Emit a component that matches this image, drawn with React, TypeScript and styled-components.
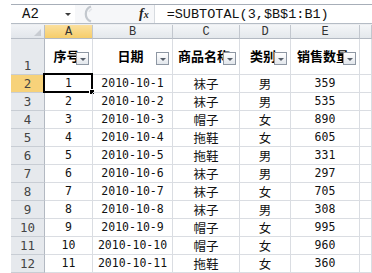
import styled, { createGlobalStyle } from "styled-components";

const GlobalStyle = createGlobalStyle`
  html, body {
    margin: 0;
    padding: 0;
    background: #ffffff;
  }
`;

const mono = `"Liberation Mono", "DejaVu Sans Mono", monospace`;
const digits = `"DejaVu Sans Mono", "Noto Sans CJK SC", monospace`;

const rows = [
  ["1", "2010-10-1", "袜子", "男", "359"],
  ["2", "2010-10-2", "袜子", "男", "535"],
  ["3", "2010-10-3", "帽子", "女", "890"],
  ["4", "2010-10-4", "拖鞋", "女", "605"],
  ["5", "2010-10-5", "拖鞋", "男", "331"],
  ["6", "2010-10-6", "袜子", "男", "297"],
  ["7", "2010-10-7", "袜子", "女", "705"],
  ["8", "2010-10-8", "袜子", "男", "308"],
  ["9", "2010-10-9", "帽子", "女", "995"],
  ["10", "2010-10-10", "帽子", "女", "960"],
  ["11", "2010-10-11", "拖鞋", "女", "360"],
];

const titles = ["序号", "日期", "商品名称", "类别", "销售数量"];
const letters = ["A", "B", "C", "D", "E", ""];

export default function App() {
  return (
    <>
      <GlobalStyle />
      <Window>
        <FormulaBar>
          <NameBox>
            <span>A2</span>
            <DropArrow />
          </NameBox>
          <Splitter>
            <svg width="14" height="18" viewBox="0 0 14 18">
              <path d="M11 1.5 A8 8 0 0 0 11 16.5" fill="none" stroke="#c3c8ce" strokeWidth="2.2" />
              <path d="M12 4 A5 5 0 0 0 9 7" fill="none" stroke="#e2e5e9" strokeWidth="1.5" />
            </svg>
          </Splitter>
          <FxLabel>f<sub>x</sub></FxLabel>
          <FormulaInput>=SUBTOTAL(3,$B$1:B1)</FormulaInput>
        </FormulaBar>
        <Gap />
        <Sheet>
          <Corner>
            <CornerMark />
          </Corner>
          {letters.map((l, i) => (
            <ColHead key={l + i} $active={i === 0}>{l}</ColHead>
          ))}

          <RowHead>1</RowHead>
          {titles.map((t) => (
            <TitleCell key={t}>
              <TitleText>{t}</TitleText>
              <FilterButton>
                <FilterArrow />
              </FilterButton>
            </TitleCell>
          ))}
          <Cell />

          {rows.map((r, i) => (
            <Row key={r[0]} num={i + 2} data={r} />
          ))}
        </Sheet>
      </Window>
    </>
  );
}

function Row({ num, data }: { num: number; data: string[] }) {
  const selected = num === 2;
  return (
    <>
      <RowHead $active={selected}>{num}</RowHead>
      {data.map((v, i) => (
        <Cell key={i} $cjk={i === 2 || i === 3}>
          {v}
          {selected && i === 0 && (
            <Selection>
              <Handle />
            </Selection>
          )}
        </Cell>
      ))}
      <Cell />
    </>
  );
}

const Window = styled.div`
  display: flex;
  flex-direction: column;
  padding: 4px 0 0 11px;
  height: 269px;
  overflow: hidden;
`;

const FormulaBar = styled.div`
  display: flex;
  align-items: stretch;
  height: 21px;
  border-top: 1px solid #a7aeb8;
  border-bottom: 1px solid #b5bcc5;
  background: #f6f7f9;
`;

const NameBox = styled.div`
  width: 64px;
  display: flex;
  align-items: center;
  justify-content: space-between;
  padding: 0 4px 0 11px;
  box-sizing: border-box;
  font: 14px "Liberation Mono", monospace;
  color: #111;
  background: #ffffff;
`;

const DropArrow = styled.span`
  width: 0;
  height: 0;
  border-left: 3px solid transparent;
  border-right: 3px solid transparent;
  border-top: 3px solid #3c3c3c;
  margin-top: 1px;
`;

const Splitter = styled.div`
  display: flex;
  align-items: center;
  padding-left: 5px;
  width: 59px;
`;

const FxLabel = styled.div`
  display: flex;
  align-items: center;
  font: italic bold 14px "Liberation Serif", serif;
  color: #222;
  padding-right: 5px;
  sub {
    font-size: 10px;
    vertical-align: baseline;
    margin-left: 0;
  }
`;

const FormulaInput = styled.div`
  flex: 1;
  display: flex;
  align-items: center;
  padding-left: 12px;
  background: #ffffff;
  border-left: 1px solid #d7dbe0;
  font: 13.5px ${mono};
  color: #111;
  white-space: nowrap;
`;

const Gap = styled.div`
  height: 4px;
  background: #eceef1;
`;

const Sheet = styled.div`
  display: grid;
  grid-template-columns: 34px 48px 80px 67px 51px 69px 1fr;
  grid-template-rows: 14px 36px repeat(11, 18px);
`;

const Corner = styled.div`
  position: relative;
  background: linear-gradient(#f1f3f6, #e2e6eb);
  border-right: 1px solid #b8bec7;
  border-bottom: 1px solid #b8bec7;
`;

const CornerMark = styled.div`
  position: absolute;
  right: 3px;
  bottom: 2px;
  width: 0;
  height: 0;
  border-left: 7px solid transparent;
  border-bottom: 7px solid #c8ccd2;
`;

const ColHead = styled.div<{ $active?: boolean }>`
  display: flex;
  align-items: center;
  justify-content: center;
  font: 12px ${mono};
  color: #333;
  background: ${(p) =>
    p.$active ? "linear-gradient(#fbe09e, #f6cd6a)" : "linear-gradient(#f4f6f8, #e4e8ec)"};
  border-right: 1px solid #c2c7ce;
  border-bottom: 1px solid #b3b9c2;
`;

const RowHead = styled.div<{ $active?: boolean }>`
  display: flex;
  align-items: flex-end;
  justify-content: center;
  padding-bottom: 1px;
  font: 12.5px ${digits};
  line-height: 15px;
  color: #444;
  background: ${(p) => (p.$active ? "#f7d27a" : "#e6e9ed")};
  border-right: 1px solid #b3b9c2;
  border-bottom: 1px solid #c8cdd4;
`;

const Cell = styled.div<{ $cjk?: boolean }>`
  position: relative;
  display: flex;
  align-items: flex-end;
  justify-content: center;
  padding-bottom: 1px;
  font: ${(p) => (p.$cjk ? `12.5px "Noto Sans CJK SC", sans-serif` : `11.5px ${digits}`)};
  line-height: 15px;
  color: #111;
  border-right: 1px solid #dadde2;
  border-bottom: 1px solid #dadde2;
  white-space: nowrap;
`;

const TitleCell = styled(Cell)`
  align-items: center;
  padding-bottom: 2px;
`;

const TitleText = styled.span`
  font: bold 13px "Noto Sans CJK SC", sans-serif;
  color: #000;
  margin-left: -4px;
`;

const FilterButton = styled.div`
  position: absolute;
  right: 3px;
  top: 13px;
  width: 11px;
  height: 11px;
  border: 1px solid #8e97a3;
  background: linear-gradient(#ffffff, #e3e7ec);
  display: flex;
  align-items: center;
  justify-content: center;
`;

const FilterArrow = styled.span`
  width: 0;
  height: 0;
  border-left: 3px solid transparent;
  border-right: 3px solid transparent;
  border-top: 3px solid #555d68;
  margin-top: 1px;
`;

const Selection = styled.div`
  position: absolute;
  left: -2px;
  top: -2px;
  right: -1px;
  bottom: -1px;
  border: 2px solid #000;
  pointer-events: none;
`;

const Handle = styled.div`
  position: absolute;
  right: -4px;
  bottom: -4px;
  width: 4px;
  height: 4px;
  background: #000;
  border: 1px solid #fff;
`;
